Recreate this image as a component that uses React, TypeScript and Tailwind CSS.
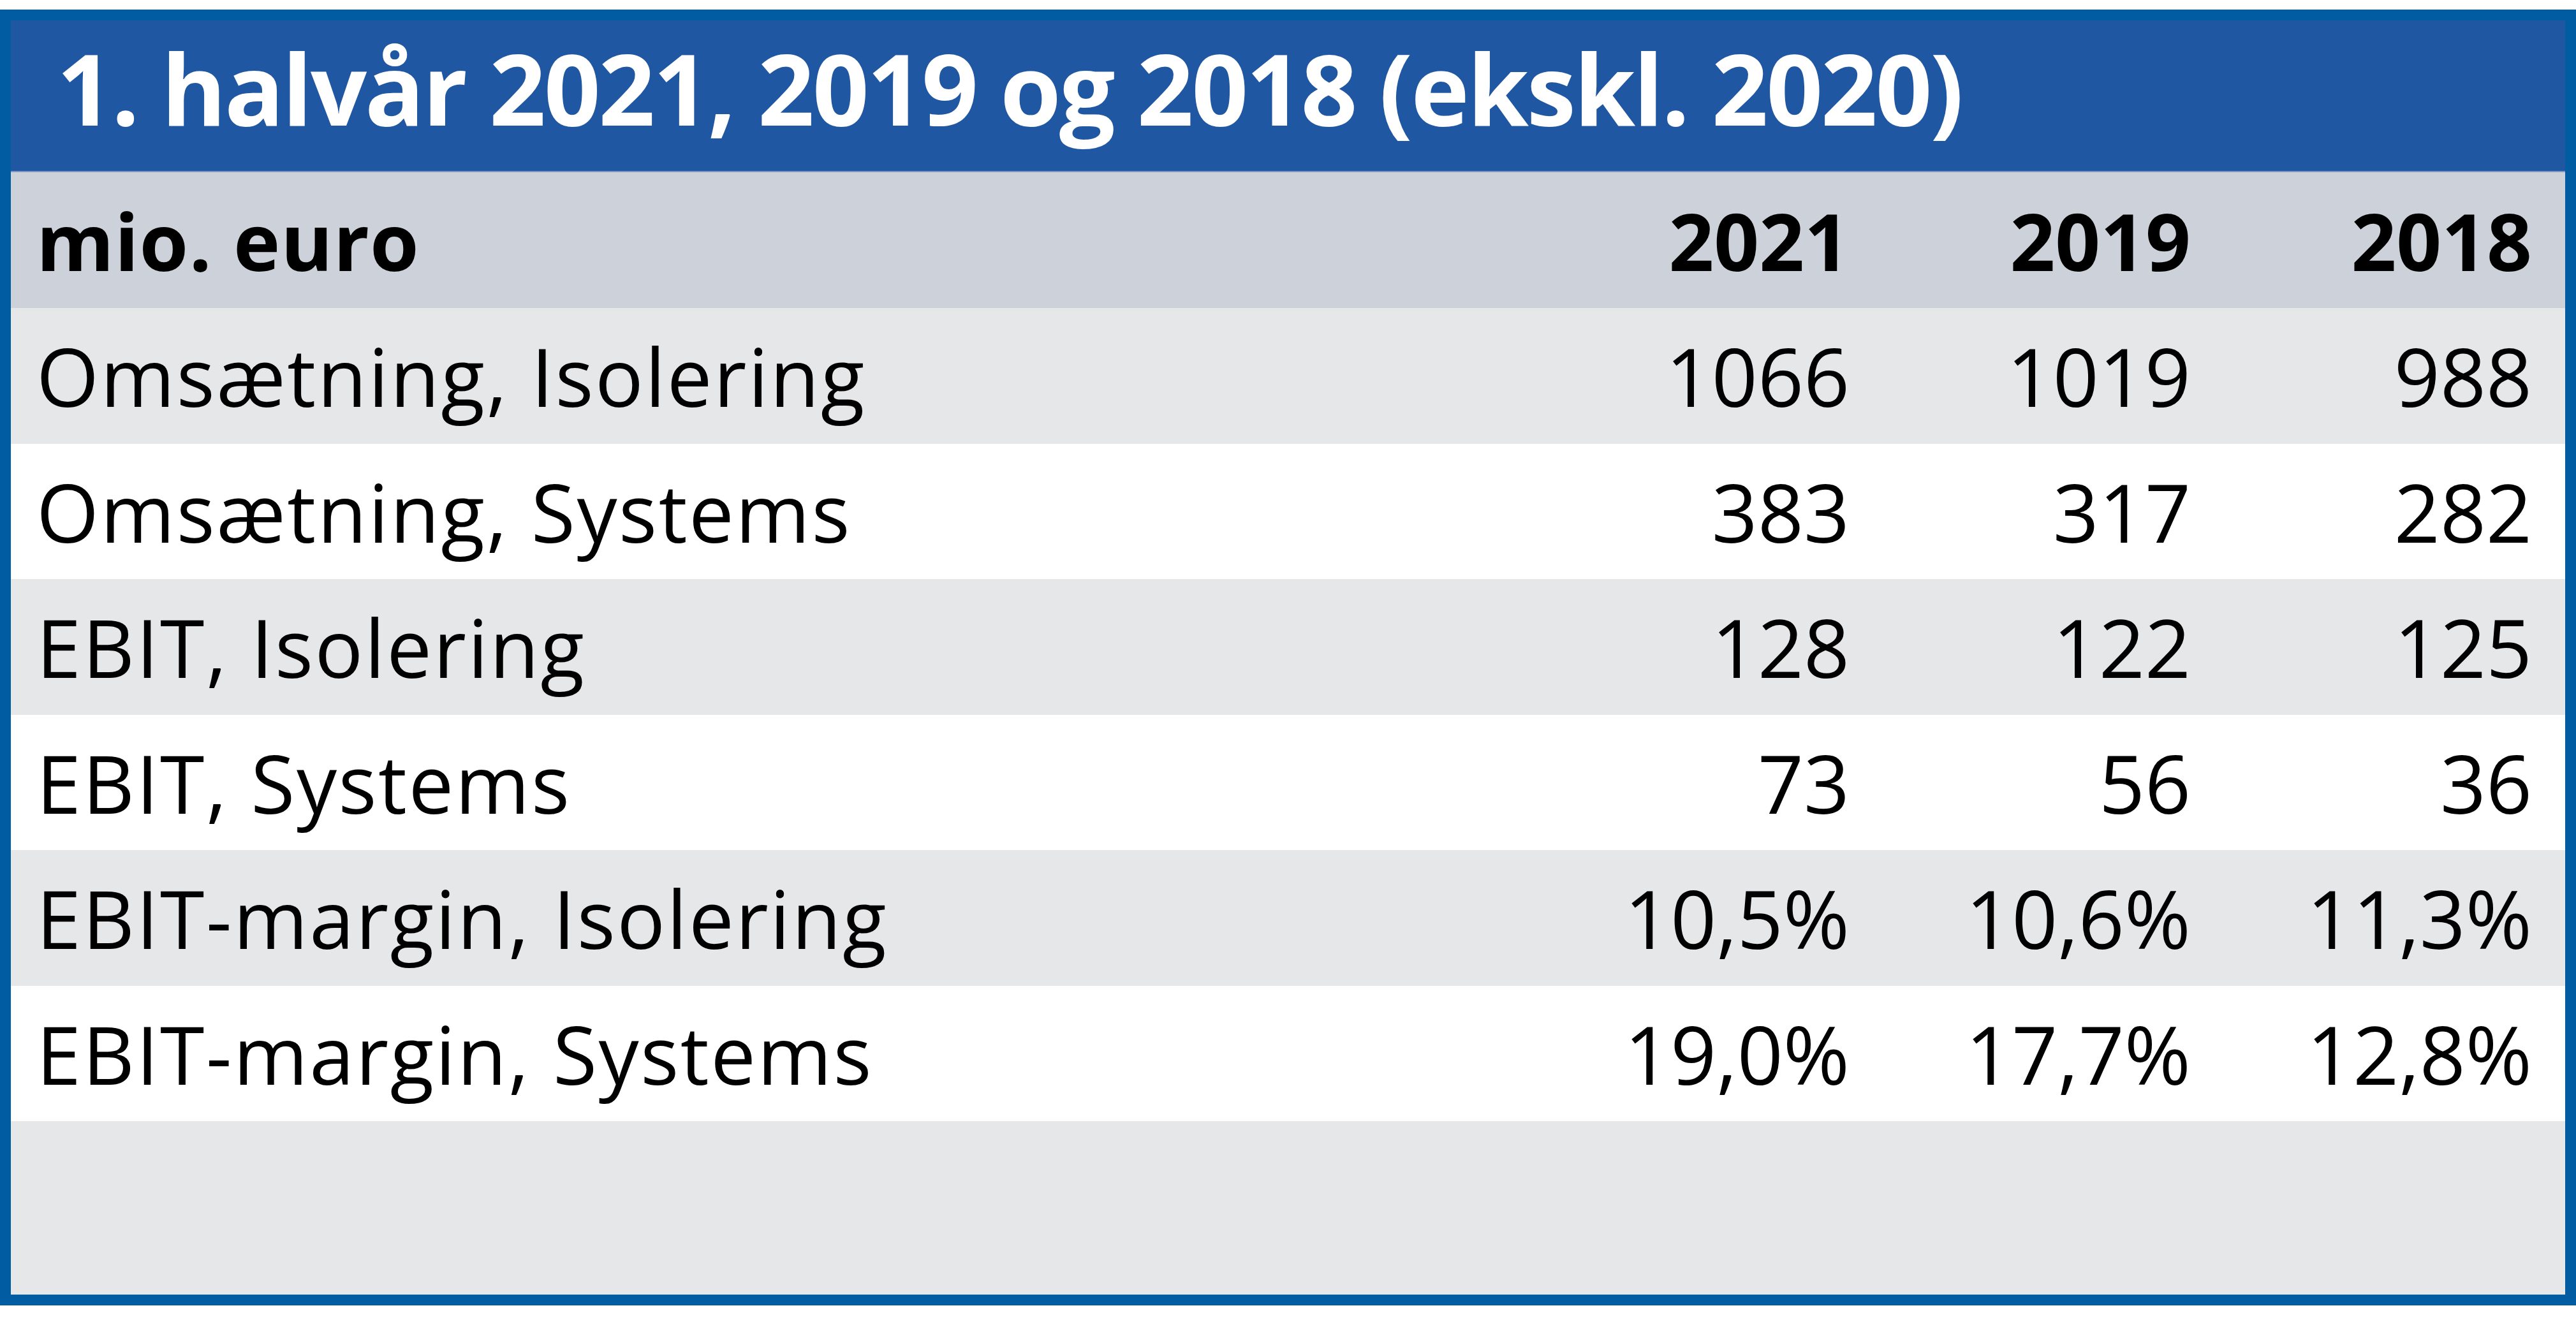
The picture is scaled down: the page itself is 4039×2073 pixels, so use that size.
import React from 'react';

type Row = { label: string; values: [string, string, string] };

const rows: Row[] = [
  { label: 'Omsætning, Isolering', values: ['1066', '1019', '988'] },
  { label: 'Omsætning, Systems', values: ['383', '317', '282'] },
  { label: 'EBIT, Isolering', values: ['128', '122', '125'] },
  { label: 'EBIT, Systems', values: ['73', '56', '36'] },
  { label: 'EBIT-margin, Isolering', values: ['10,5%', '10,6%', '11,3%'] },
  { label: 'EBIT-margin, Systems', values: ['19,0%', '17,7%', '12,8%'] },
];

const years = ['2021', '2019', '2018'];

const App: React.FC = () => {
  return (
    <div className="w-[4039px] h-[2073px] bg-white pt-[15px] font-['Open_Sans',sans-serif] text-black">
      <div className="h-[2032px] w-full border-[17px] border-[#015ca2] bg-[#e6e7e9] flex flex-col">
        {/* title bar */}
        <div className="h-[238px] bg-[#2057a3] border-b-2 border-[#7f95c4] flex items-center pl-[72px] pb-[28px]">
          <h1 className="text-white font-bold text-[155px] leading-none tracking-[-3px]">
            1. halvår 2021, 2019 og 2018 (ekskl. 2020)
          </h1>
        </div>

        {/* header row */}
        <div className="h-[213px] bg-[#cdd1da] grid grid-cols-[1fr_535px_535px_535px] items-center pl-[40px] pr-[52px] font-bold text-[124px] leading-none">
          <div className="tracking-[1px]">mio. euro</div>
          {years.map((y) => (
            <div key={y} className="text-right">
              {y}
            </div>
          ))}
        </div>

        {/* data rows */}
        {rows.map((row, i) => (
          <div
            key={row.label}
            className={
              'h-[212.5px] grid grid-cols-[1fr_535px_535px_535px] items-center pl-[40px] pr-[52px] text-[126px] leading-none ' +
              (i % 2 === 0 ? 'bg-[#e6e7e9]' : 'bg-white')
            }
          >
            <div className="tracking-[2.5px]">{row.label}</div>
            {row.values.map((v, j) => (
              <div key={j} className="text-right">
                {v}
              </div>
            ))}
          </div>
        ))}

        <div className="flex-1 bg-[#e6e7e9]" />
      </div>
    </div>
  );
};

export default App;
